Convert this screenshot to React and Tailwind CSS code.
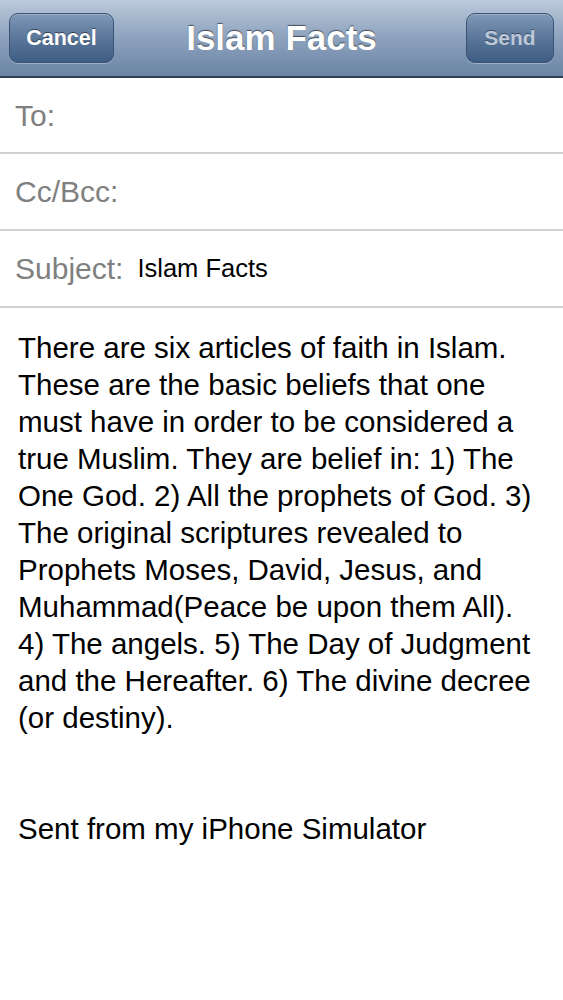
export default function App() {
  const lines = [
    "There are six articles of faith in Islam.",
    "These are the basic beliefs that one",
    "must have in order to be considered a",
    "true Muslim. They are belief in: 1) The",
    "One God. 2) All the prophets of God. 3)",
    "The original scriptures revealed to",
    "Prophets Moses, David, Jesus, and",
    "Muhammad(Peace be upon them All).",
    "4) The angels. 5) The Day of Judgment",
    "and the Hereafter. 6) The divine decree",
    "(or destiny).",
  ];

  return (
    <div className="min-h-screen bg-white font-['Liberation_Sans',Arial,sans-serif]">
      {/* Nav bar */}
      <div className="h-[78px] flex items-center justify-between px-[9px] bg-gradient-to-b from-[#bccadb] via-[#8da2bd] to-[#6b84a5] border-b-2 border-[#2d3f57] relative">
        <button className="w-[105px] h-[50px] rounded-[9px] border border-[#3a5373] bg-gradient-to-b from-[#7f98b8] via-[#5a7699] to-[#3f5d84] text-white font-bold text-[21.5px] shadow-[inset_0_1px_0_rgba(255,255,255,0.25),0_1px_0_rgba(255,255,255,0.3)] [text-shadow:0_-1px_0_rgba(0,0,0,0.5)]">
          Cancel
        </button>
        <div className="absolute left-[100px] right-[100px] text-center text-white font-bold text-[35px] [text-shadow:0_-1px_1px_rgba(0,0,0,0.55)]">
          Islam Facts
        </div>
        <button className="w-[88px] h-[50px] rounded-[9px] border border-[#3a5373] bg-gradient-to-b from-[#7f98b8] via-[#5a7699] to-[#3f5d84] text-[#bcc8d8] font-bold text-[21px] shadow-[inset_0_1px_0_rgba(255,255,255,0.25),0_1px_0_rgba(255,255,255,0.3)] [text-shadow:0_-1px_0_rgba(0,0,0,0.4)]">
          Send
        </button>
      </div>

      {/* Header fields */}
      <div className="h-[76px] flex items-center px-[15px] border-b-2 border-[#d2d2d2]">
        <span className="text-[30px] text-[#808080]">To:</span>
      </div>
      <div className="h-[77px] flex items-center px-[15px] border-b-2 border-[#d2d2d2]">
        <span className="text-[30px] text-[#808080]">Cc/Bcc:</span>
      </div>
      <div className="h-[77px] flex items-center px-[15px] border-b-2 border-[#d2d2d2] gap-[14px]">
        <span className="text-[30px] text-[#808080]">Subject:</span>
        <span className="text-[25.5px] text-black">Islam Facts</span>
      </div>

      {/* Body */}
      <div className="px-[18px] pt-[21px] text-[29.5px] leading-[37px] text-black">
        {lines.map((l, i) => (
          <div key={i} className="whitespace-nowrap">{l}</div>
        ))}
        <div className="h-[74px]" />
        <div>Sent from my iPhone Simulator</div>
      </div>
    </div>
  );
}
